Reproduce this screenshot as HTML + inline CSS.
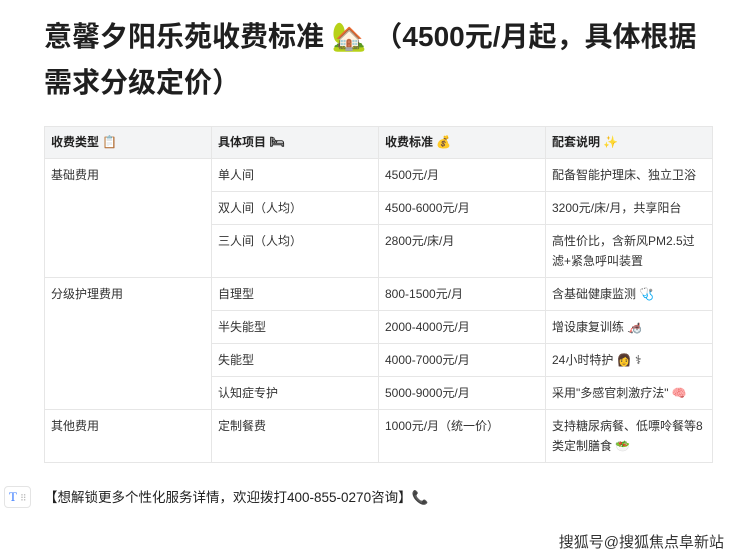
<!DOCTYPE html>
<html><head><meta charset="utf-8"><style>
body{margin:0;background:#fff;font-family:"Liberation Sans","Noto Sans CJK SC",sans-serif;color:#222;width:740px;height:555px;overflow:hidden;position:relative}
h1{position:absolute;left:44px;top:14px;margin:0;width:680px;font-size:28px;line-height:46px;font-weight:bold;color:#1f1f1f}
table{position:absolute;left:44px;top:126px;border-collapse:collapse;width:668px;font-size:12px;table-layout:fixed}
td,th{border:1px solid #e6e6e6;padding:6px 6px 6px 6px;vertical-align:top;text-align:left;line-height:20px;color:#333}
th{background:#f3f4f5;font-weight:bold;height:19px;color:#222;line-height:19px}
tr.r td{height:20px}
tr.t td{height:40px}
.foot{position:absolute;left:44px;top:486px;font-size:13.5px;color:#222}
.T{position:absolute;left:4px;top:486px;width:25px;height:20px;border:1px solid #e4e4e4;border-radius:4px;color:#3b7cff;font-size:13px;line-height:20px;text-indent:4px;font-family:"Liberation Serif",serif}
.wm{position:absolute;right:16px;top:531px;font-size:15px;color:#333}
</style></head><body>
<h1>意馨夕阳乐苑收费标准 🏡 （4500元/月起，具体根据需求分级定价）</h1>
<table>
<colgroup><col style="width:167px"><col style="width:167px"><col style="width:167px"><col style="width:167px"></colgroup>
<tr><th>收费类型 📋</th><th>具体项目 🛏</th><th>收费标准 💰</th><th>配套说明 ✨</th></tr>
<tr class="r"><td rowspan="3">基础费用</td><td>单人间</td><td>4500元/月</td><td>配备智能护理床、独立卫浴</td></tr>
<tr class="r"><td>双人间（人均）</td><td>4500-6000元/月</td><td>3200元/床/月，共享阳台</td></tr>
<tr class="t"><td>三人间（人均）</td><td>2800元/床/月</td><td>高性价比，含新风PM2.5过滤+紧急呼叫装置</td></tr>
<tr class="r"><td rowspan="4">分级护理费用</td><td>自理型</td><td>800-1500元/月</td><td>含基础健康监测 🩺</td></tr>
<tr class="r"><td>半失能型</td><td>2000-4000元/月</td><td>增设康复训练 🦽</td></tr>
<tr class="r"><td>失能型</td><td>4000-7000元/月</td><td>24小时特护 👩 ⚕</td></tr>
<tr class="r"><td>认知症专护</td><td>5000-9000元/月</td><td>采用"多感官刺激疗法" 🧠</td></tr>
<tr class="t"><td>其他费用</td><td>定制餐费</td><td>1000元/月（统一价）</td><td>支持糖尿病餐、低嘌呤餐等8类定制膳食 🥗</td></tr>
</table>
<div class="T">T <span style="color:#bbb;font-size:9px">⠿</span></div>
<div class="foot">【想解锁更多个性化服务详情，欢迎拨打400-855-0270咨询】<span style="color:#e0407a">📞</span></div>
<div class="wm">搜狐号@搜狐焦点阜新站</div>
</body></html>
